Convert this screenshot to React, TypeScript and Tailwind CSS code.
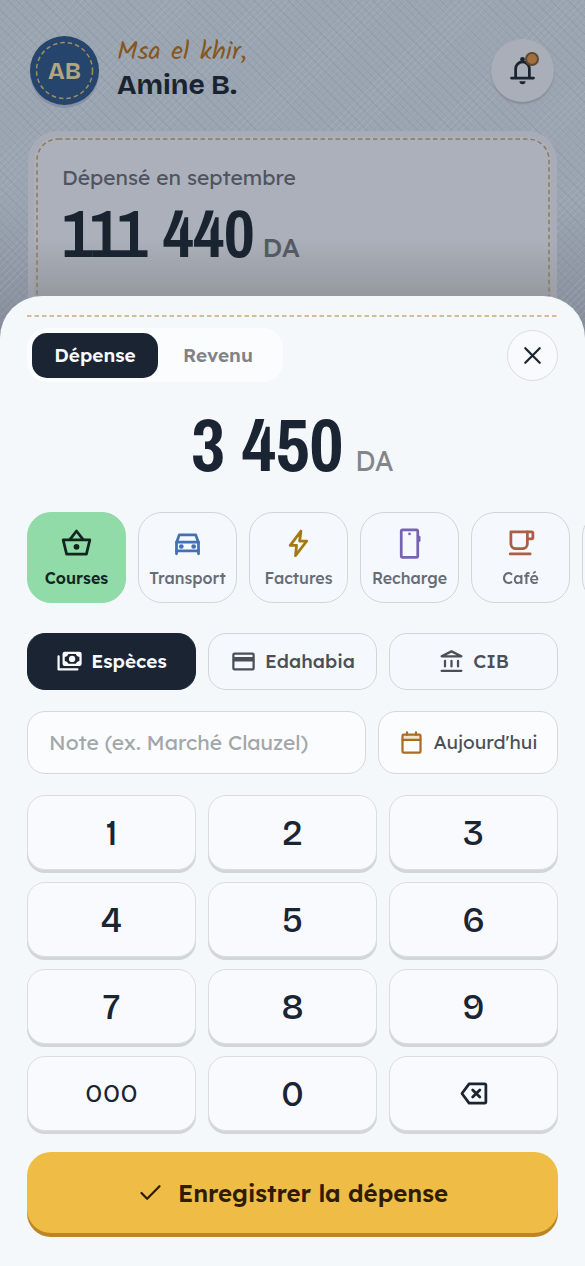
import { useState } from 'react';
import type { ReactNode } from 'react';
import clsx from 'clsx';

type IconProps = { className?: string; children: ReactNode };

function Icon({ className, children }: IconProps) {
  return (
    <svg
      viewBox="0 0 24 24"
      fill="none"
      stroke="currentColor"
      strokeWidth="2"
      strokeLinecap="round"
      strokeLinejoin="round"
      aria-hidden="true"
      className={clsx('shrink-0', className)}
    >
      {children}
    </svg>
  );
}

const categories = [
  {
    id: 'courses',
    label: 'Courses',
    color: 'text-[#12261f]',
    icon: (
      <>
        <path d="M2.3 9.4h19.4L19.2 19.7H4.8z" />
        <path d="M7.3 9 12 2.9 16.7 9" />
        <circle cx="12" cy="14.4" r="2.1" fill="currentColor" stroke="none" />
      </>
    ),
  },
  {
    id: 'transport',
    label: 'Transport',
    color: 'text-[#4470b4]',
    icon: (
      <>
        <path d="M4 19.5v-8L6 5.7h12l2 5.8v8" />
        <path d="M4 11h16M4 17.4h16" />
        <circle cx="7.5" cy="14.2" r="1.7" fill="currentColor" stroke="none" />
        <circle cx="16.5" cy="14.2" r="1.7" fill="currentColor" stroke="none" />
      </>
    ),
  },
  {
    id: 'factures',
    label: 'Factures',
    color: 'text-[#a27a12]',
    icon: <path d="M13.8 2.9 6 13.4h4.6L9.8 20.8 18 10.2h-5.2z" />,
  },
  {
    id: 'recharge',
    label: 'Recharge',
    color: 'text-[#7663b4]',
    icon: (
      <>
        <rect x="6" y="2" width="12" height="20" rx="1" />
        <path d="M19 7.3v2.6" />
        <circle cx="12" cy="5" r="1" fill="currentColor" stroke="none" />
      </>
    ),
  },
  {
    id: 'cafe',
    label: 'Café',
    color: 'text-[#ad5d43]',
    icon: (
      <>
        <path d="M5 3.6h12v8.6a3.6 3.6 0 0 1-3.6 3.6H8.6A3.6 3.6 0 0 1 5 12.2z" />
        <path d="M17 3.6h3a1 1 0 0 1 1 1v3a1 1 0 0 1-1 1h-3" />
        <path d="M4.5 19.6h14.5" />
      </>
    ),
  },
];

const methods = [
  {
    id: 'especes',
    label: 'Espèces',
    icon: (
      <>
        <path d="M2.3 7.5v11.5h16.7" />
        <rect x="6.8" y="4.4" width="15" height="10.6" rx="1" />
        <circle cx="14.3" cy="9.7" r="2.8" fill="currentColor" stroke="none" />
        <path
          stroke="none"
          fill="currentColor"
          d="M7 4.5h4.2A4.2 4.2 0 0 1 7 8zM21.6 4.5h-4.2a4.2 4.2 0 0 0 4.2 3.5zM7 15h4.2A4.2 4.2 0 0 0 7 11.5zM21.6 15h-4.2a4.2 4.2 0 0 1 4.2-3.5z"
        />
      </>
    ),
  },
  {
    id: 'edahabia',
    label: 'Edahabia',
    icon: (
      <>
        <rect x="3" y="5" width="18" height="14" rx="1" />
        <path d="M3 8h18v4H3z" fill="currentColor" stroke="none" />
      </>
    ),
  },
  {
    id: 'cib',
    label: 'CIB',
    icon: (
      <>
        <path d="M3.2 7.4 12 3l8.8 4.4z" />
        <path d="M6.2 11.4v5M12 11.4v5M17.8 11.4v5M3.2 20.3h17.6" />
      </>
    ),
  },
];

const keys = ['1', '2', '3', '4', '5', '6', '7', '8', '9', '000', '0', 'back'];

const formatAmount = (value: string) => value.replace(/\B(?=(\d{3})+$)/g, ' ');

function Header() {
  return (
    <header className="flex h-[69px] items-center pr-[31px] pl-[30px]">
      <div className="relative flex size-[69px] items-center justify-center rounded-full bg-[#26456c] font-['Bricolage_Grotesque','Liberation_Sans',sans-serif] text-[24px] font-bold text-[#b3a67f] shadow-[0_3px_0_#8791a5]">
        <svg viewBox="0 0 69 69" fill="none" aria-hidden="true" className="absolute inset-0">
          <circle cx="34.5" cy="34.5" r="28" stroke="#a08d5b" strokeWidth="1.5" strokeDasharray="4.5 3" />
        </svg>
        AB
      </div>
      <div className="ml-[18px] pb-1">
        <p className="font-[Kalam,Lato,sans-serif] text-[26px] leading-[33px] text-[#84571f]">Msa el khir,</p>
        <p className="font-['Bricolage_Grotesque','Liberation_Sans',sans-serif] text-[28px] leading-[33px] font-bold text-[#1a2431]">
          Amine B.
        </p>
      </div>
      <button
        type="button"
        aria-label="Notifications"
        className="relative ml-auto flex size-[63px] items-center justify-center rounded-full bg-[#a9aeb9] text-[#1a2431] shadow-[0_2px_2px_#878d97]"
      >
        <Icon className="size-[33px]">
          <path d="M7 17.5V10.8a5 5 0 0 1 10 0v6.7M4 17.5h16" />
          <circle cx="12" cy="3.9" r="1.7" fill="currentColor" stroke="none" />
          <path d="M9.8 19.8h4.4a2.2 2.2 0 0 1-4.4 0z" fill="currentColor" stroke="none" />
        </Icon>
        <span className="absolute top-[13px] right-[15px] size-[14px] rounded-full border-2 border-[#60482f] bg-[#a06e40]" />
      </button>
    </header>
  );
}

function SummaryCard() {
  return (
    <section className="relative mx-7 mt-[26px] h-60 rounded-[30px] bg-linear-to-b from-[#abb0ba] from-45% to-[#8b8e93] to-80% shadow-[inset_0_0_0_6px_#a2a8b366]">
      {/* stitched outline */}
      <svg aria-hidden="true" className="absolute inset-2 h-[calc(100%-16px)] w-[calc(100%-17px)] overflow-visible">
        <rect
          x="1"
          y="0"
          width="100%"
          height="100%"
          rx="21"
          fill="none"
          stroke="#8e7a5b"
          strokeWidth="1.5"
          strokeDasharray="4.5 3"
        />
      </svg>
      <div className="px-[34px] pt-[31px]">
        <p className="text-[21px] leading-[30px] text-[#50545f]">Dépensé en septembre</p>
        <p className="mt-[7px] flex items-baseline text-[#1a2431]">
          <span className="font-['Archivo_Narrow','Roboto_Condensed','Liberation_Sans',sans-serif] text-[67px] leading-[68px] font-bold">
            111 440
          </span>
          <span className="ml-2 text-[26px] font-medium text-[#555962]">DA</span>
        </p>
      </div>
    </section>
  );
}

export default function App() {
  const [kind, setKind] = useState('depense');
  const [amount, setAmount] = useState('3450');
  const [category, setCategory] = useState('courses');
  const [method, setMethod] = useState('especes');
  const [note, setNote] = useState('');

  const press = (key: string) => {
    if (key === 'back') setAmount((prev) => prev.slice(0, -1) || '0');
    else setAmount((prev) => (prev + key).replace(/^0+(?=\d)/, '').slice(0, 9));
  };

  return (
    <div className="min-h-screen overflow-hidden bg-[#9aa4b0] bg-[repeating-linear-gradient(45deg,#7a869540_0_1px,transparent_1px_6px),repeating-linear-gradient(-45deg,#b4c0cb38_0_1px,transparent_1px_5px),linear-gradient(#9ba5b1_0,#9ba5b1_200px,#868d9a_330px)] pt-9 font-[Lexend,Inter,sans-serif]">
      <Header />
      <SummaryCard />

      <main className="fixed inset-x-0 bottom-0 rounded-t-[42px] bg-[#f4f8fb] px-[27px] pt-[19px] pb-[33px] text-[#1b2433]">
        <svg aria-hidden="true" className="h-[2px] w-full">
          <line x1="0" y1="1" x2="100%" y2="1" stroke="#c9a877" strokeWidth="1.5" strokeDasharray="4.5 3" />
        </svg>

        <div className="mt-[11px] flex items-center justify-between">
          <div className="flex h-[54px] items-center rounded-[20px] bg-[#fafcfd] px-[5px] text-[19px] font-semibold">
            <button
              type="button"
              aria-pressed={kind === 'depense'}
              onClick={() => setKind('depense')}
              className={clsx(
                'h-[45px] w-[126px] rounded-[15px]',
                kind === 'depense' ? 'bg-[#1b2433] text-[#f8fafc]' : 'text-[#7f8388]',
              )}
            >
              Dépense
            </button>
            <button
              type="button"
              aria-pressed={kind === 'revenu'}
              onClick={() => setKind('revenu')}
              className={clsx(
                'h-[45px] w-[120px] rounded-[15px]',
                kind === 'revenu' ? 'bg-[#1b2433] text-[#f8fafc]' : 'text-[#7f8388]',
              )}
            >
              Revenu
            </button>
          </div>
          <button
            type="button"
            aria-label="Fermer"
            className="flex size-[51px] items-center justify-center rounded-full border border-[#d9dce0] bg-[#f8fafd]"
          >
            <Icon className="size-[27px]">
              <path d="m5.6 5.6 12.8 12.8M18.4 5.6 5.6 18.4" />
            </Icon>
          </button>
        </div>

        <p className="flex h-[130px] items-baseline justify-center pt-5">
          <span className="font-['Archivo_Narrow','Roboto_Condensed','Liberation_Sans',sans-serif] text-[74px] leading-[84px] font-bold">
            {formatAmount(amount)}
          </span>
          <span className="ml-3 text-[27px] text-[#82868b]">DA</span>
        </p>

        <div className="-mr-[27px] flex gap-3 overflow-hidden">
          {categories.map((item) => (
            <button
              key={item.id}
              type="button"
              aria-pressed={category === item.id}
              onClick={() => setCategory(item.id)}
              className={clsx(
                'flex h-[91px] w-[99px] shrink-0 flex-col items-center rounded-3xl border pt-[14px] text-base',
                category === item.id
                  ? 'border-[#90dba8] bg-[#90dba8] font-semibold text-[#12261f]'
                  : 'border-[#d2d5d9] bg-[#f5f8fc] font-medium text-[#686d75]',
              )}
            >
              <Icon className={clsx('size-[33px]', item.color)}>{item.icon}</Icon>
              <span className="mt-[6px] leading-6">{item.label}</span>
            </button>
          ))}
          <button
            type="button"
            aria-label="Plus de catégories"
            className="h-[91px] w-[99px] shrink-0 rounded-3xl border border-[#d2d5d9] bg-[#f5f8fc]"
          />
        </div>

        <div className="mt-[30px] grid grid-cols-3 gap-3">
          {methods.map((item) => (
            <button
              key={item.id}
              type="button"
              aria-pressed={method === item.id}
              onClick={() => setMethod(item.id)}
              className={clsx(
                'flex h-[57px] items-center justify-center gap-2 rounded-[18px] border text-[19px]',
                method === item.id
                  ? 'border-[#1b2433] bg-[#1b2433] font-semibold text-[#f8fafc]'
                  : 'border-[#d2d5d9] bg-[#f5f8fc] font-medium text-[#4b4f57]',
              )}
            >
              <Icon className="size-[27px]">{item.icon}</Icon>
              {item.label}
            </button>
          ))}
        </div>

        <div className="mt-[21px] flex gap-3">
          <input
            type="text"
            aria-label="Note"
            value={note}
            onChange={(e) => setNote(e.target.value)}
            placeholder="Note (ex. Marché Clauzel)"
            className="h-[63px] min-w-0 flex-1 rounded-[18px] border border-[#d5d8dc] bg-[#fafcfd] px-[21px] pb-[2px] text-[21px] placeholder:text-[#a3a6aa]"
          />
          <button
            type="button"
            className="flex h-[63px] w-[180px] items-center justify-center gap-2 rounded-[18px] border border-[#d5d8dc] bg-[#fafcfd] text-[19px] text-[#4b4f57]"
          >
            <Icon className="size-[27px] text-[#ab6d24]">
              <path d="M4 5h16v4H4z" fill="#f3e3cc" stroke="none" />
              <rect x="4" y="5" width="16" height="16" rx="1" />
              <path d="M4 9.6h16M8 3v2M16 3v2" />
            </Icon>
            Aujourd'hui
          </button>
        </div>

        <div className="mt-[21px] grid grid-cols-3 gap-3">
          {keys.map((key) => (
            <button
              key={key}
              type="button"
              aria-label={key === 'back' ? 'Effacer' : undefined}
              onClick={() => press(key)}
              className={clsx(
                "flex h-[75px] items-center justify-center rounded-[18px] border border-[#dadde1] bg-[#f8fafe] font-['Bricolage_Grotesque',Lexend,sans-serif] shadow-[0_3px_0_#d2d6da]",
                key === '000' && 'text-[27px]',
                key.length === 1 && 'pt-[2px] text-[35px] font-medium',
              )}
            >
              {key === 'back' ? (
                <Icon className="size-[33px]">
                  <path d="M8.8 5H20a1 1 0 0 1 1 1v12a1 1 0 0 1-1 1H8.8L3.6 12z" />
                  <path d="m11.4 9.4 5.2 5.2M16.6 9.4l-5.2 5.2" />
                </Icon>
              ) : (
                key
              )}
            </button>
          ))}
        </div>

        <button
          type="button"
          className="mt-[21px] flex h-[81px] w-full items-center justify-center gap-[14px] rounded-3xl bg-[#efbc46] text-2xl font-semibold text-[#2e1c04] shadow-[0_4px_0_#ba8623]"
        >
          <Icon className="size-[27px]">
            <path d="m4 12.5 5 5L20 6.5" />
          </Icon>
          Enregistrer la dépense
        </button>
      </main>
    </div>
  );
}
